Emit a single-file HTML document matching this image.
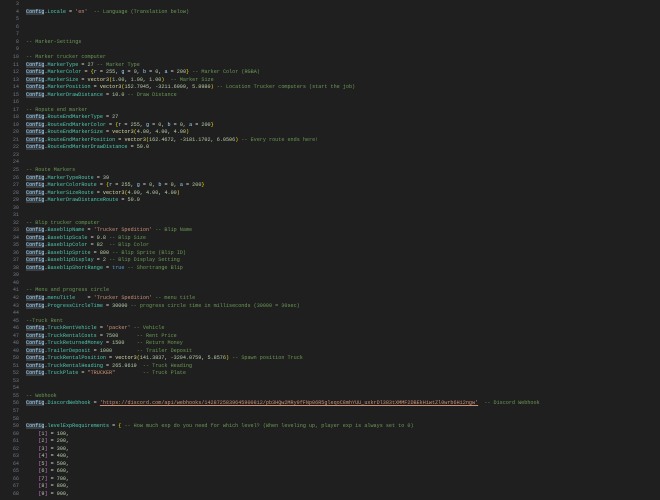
<!DOCTYPE html>
<html><head><meta charset="utf-8"><style>
html,body{margin:0;padding:0;background:#1f1f1f;width:660px;height:500px;overflow:hidden}
#c{position:absolute;top:1.3px;left:0;font-family:"Liberation Mono",monospace;font-size:5.13px;line-height:7.54px;color:#d4d4d4}
.l{height:7.54px;white-space:pre;overflow:visible}
.n{display:inline-block;width:19px;text-align:right;color:#6e7681;margin-right:7px}
.k{color:#9cdcfe;background:#3a3d41}
.p{color:#4ec9b0}
.c{color:#6a9955}
.s{color:#ce9178}
.u{color:#ce9178;text-decoration:underline}
.d{color:#b5cea8}
.f{color:#dcdcaa}
.b{color:#ffd700}
.v{color:#9cdcfe}
.t{color:#569cd6}
.m{color:#da70d6}
</style></head><body><div id="c"><div class="l"><span class="n">3</span></div><div class="l"><span class="n">4</span><span class="k">Config</span>.<span class="p">Locale</span> = <span class="s">'en'</span>  <span class="c">-- Language (Translation below)</span></div><div class="l"><span class="n">5</span></div><div class="l"><span class="n">6</span></div><div class="l"><span class="n">7</span></div><div class="l"><span class="n">8</span><span class="c">-- Marker-Settings</span></div><div class="l"><span class="n">9</span></div><div class="l"><span class="n">10</span><span class="c">-- Marker trucker computer</span></div><div class="l"><span class="n">11</span><span class="k">Config</span>.<span class="p">MarkerType</span> = <span class="d">27</span> <span class="c">-- Marker Type</span></div><div class="l"><span class="n">12</span><span class="k">Config</span>.<span class="p">MarkerColor</span> = <span class="b">{</span><span class="v">r</span> = <span class="d">255</span>, <span class="v">g</span> = <span class="d">0</span>, <span class="v">b</span> = <span class="d">0</span>, <span class="v">a</span> = <span class="d">200</span><span class="b">}</span> <span class="c">-- Marker Color (RGBA)</span></div><div class="l"><span class="n">13</span><span class="k">Config</span>.<span class="p">MarkerSize</span> = <span class="f">vector3</span><span class="b">(</span><span class="d">1.00</span>, <span class="d">1.00</span>, <span class="d">1.00</span><span class="b">)</span>  <span class="c">-- Marker Size</span></div><div class="l"><span class="n">14</span><span class="k">Config</span>.<span class="p">MarkerPosition</span> = <span class="f">vector3</span><span class="b">(</span><span class="d">152.7945</span>, <span class="d">-3211.6909</span>, <span class="d">5.8980</span><span class="b">)</span> <span class="c">-- Location Trucker computers (start the job)</span></div><div class="l"><span class="n">15</span><span class="k">Config</span>.<span class="p">MarkerDrawDistance</span> = <span class="d">10.0</span> <span class="c">-- Draw Distance</span></div><div class="l"><span class="n">16</span></div><div class="l"><span class="n">17</span><span class="c">-- Ropute end marker</span></div><div class="l"><span class="n">18</span><span class="k">Config</span>.<span class="p">RouteEndMarkerType</span> = <span class="d">27</span></div><div class="l"><span class="n">19</span><span class="k">Config</span>.<span class="p">RouteEndMarkerColor</span> = <span class="b">{</span><span class="v">r</span> = <span class="d">255</span>, <span class="v">g</span> = <span class="d">0</span>, <span class="v">b</span> = <span class="d">0</span>, <span class="v">a</span> = <span class="d">200</span><span class="b">}</span></div><div class="l"><span class="n">20</span><span class="k">Config</span>.<span class="p">RouteEndMarkerSize</span> = <span class="f">vector3</span><span class="b">(</span><span class="d">4.00</span>, <span class="d">4.00</span>, <span class="d">4.00</span><span class="b">)</span></div><div class="l"><span class="n">21</span><span class="k">Config</span>.<span class="p">RouteEndMarkerPosition</span> = <span class="f">vector3</span><span class="b">(</span><span class="d">162.4672</span>, <span class="d">-3181.1702</span>, <span class="d">6.0506</span><span class="b">)</span> <span class="c">-- Every route ends here!</span></div><div class="l"><span class="n">22</span><span class="k">Config</span>.<span class="p">RouteEndMarkerDrawDistance</span> = <span class="d">50.0</span></div><div class="l"><span class="n">23</span></div><div class="l"><span class="n">24</span></div><div class="l"><span class="n">25</span><span class="c">-- Route Markers</span></div><div class="l"><span class="n">26</span><span class="k">Config</span>.<span class="p">MarkerTypeRoute</span> = <span class="d">39</span></div><div class="l"><span class="n">27</span><span class="k">Config</span>.<span class="p">MarkerColorRoute</span> = <span class="b">{</span><span class="v">r</span> = <span class="d">255</span>, <span class="v">g</span> = <span class="d">0</span>, <span class="v">b</span> = <span class="d">0</span>, <span class="v">a</span> = <span class="d">200</span><span class="b">}</span></div><div class="l"><span class="n">28</span><span class="k">Config</span>.<span class="p">MarkerSizeRoute</span> = <span class="f">vector3</span><span class="b">(</span><span class="d">4.00</span>, <span class="d">4.00</span>, <span class="d">4.00</span><span class="b">)</span></div><div class="l"><span class="n">29</span><span class="k">Config</span>.<span class="p">MarkerDrawDistanceRoute</span> = <span class="d">50.0</span></div><div class="l"><span class="n">30</span></div><div class="l"><span class="n">31</span></div><div class="l"><span class="n">32</span><span class="c">-- Blip trucker computer</span></div><div class="l"><span class="n">33</span><span class="k">Config</span>.<span class="p">BaseblipName</span> = <span class="s">'Trucker Spedition'</span> <span class="c">-- Blip Name</span></div><div class="l"><span class="n">34</span><span class="k">Config</span>.<span class="p">BaseblipScale</span> = <span class="d">0.8</span> <span class="c">-- Blip Size</span></div><div class="l"><span class="n">35</span><span class="k">Config</span>.<span class="p">BaseblipColor</span> = <span class="d">82</span>  <span class="c">-- Blip Color</span></div><div class="l"><span class="n">36</span><span class="k">Config</span>.<span class="p">BaseblipSprite</span> = <span class="d">800</span> <span class="c">-- Blip Sprite (Blip ID)</span></div><div class="l"><span class="n">37</span><span class="k">Config</span>.<span class="p">BaseblipDisplay</span> = <span class="d">2</span> <span class="c">-- Blip Display Setting</span></div><div class="l"><span class="n">38</span><span class="k">Config</span>.<span class="p">BaseblipShortRange</span> = <span class="t">true</span> <span class="c">-- Shortrange Blip</span></div><div class="l"><span class="n">39</span></div><div class="l"><span class="n">40</span></div><div class="l"><span class="n">41</span><span class="c">-- Menu and progress circle</span></div><div class="l"><span class="n">42</span><span class="k">Config</span>.<span class="p">menuTitle</span>    = <span class="s">'Trucker Spedition'</span> <span class="c">-- menu title</span></div><div class="l"><span class="n">43</span><span class="k">Config</span>.<span class="p">ProgressCircleTime</span> = <span class="d">30000</span> <span class="c">-- progress circle time in milliseconds (30000 = 30sec)</span></div><div class="l"><span class="n">44</span></div><div class="l"><span class="n">45</span><span class="c">--Truck Rent</span></div><div class="l"><span class="n">46</span><span class="k">Config</span>.<span class="p">TruckRentVehicle</span> = <span class="s">'packer'</span> <span class="c">-- Vehicle</span></div><div class="l"><span class="n">47</span><span class="k">Config</span>.<span class="p">TruckRentalCosts</span> = <span class="d">7500</span>      <span class="c">-- Rent Price</span></div><div class="l"><span class="n">48</span><span class="k">Config</span>.<span class="p">TruckReturnedMoney</span> = <span class="d">1500</span>    <span class="c">-- Return Money</span></div><div class="l"><span class="n">49</span><span class="k">Config</span>.<span class="p">TrailerDeposit</span> = <span class="d">1000</span>        <span class="c">-- Trailer Deposit</span></div><div class="l"><span class="n">50</span><span class="k">Config</span>.<span class="p">TruckRentalPosition</span> = <span class="f">vector3</span><span class="b">(</span><span class="d">141.3837</span>, <span class="d">-3204.0759</span>, <span class="d">5.8576</span><span class="b">)</span> <span class="c">-- Spawn position Truck</span></div><div class="l"><span class="n">51</span><span class="k">Config</span>.<span class="p">TruckRentalHeading</span> = <span class="d">265.9619</span>  <span class="c">-- Truck Heading</span></div><div class="l"><span class="n">52</span><span class="k">Config</span>.<span class="p">TruckPlate</span> = <span class="s">"TRUCKER"</span>         <span class="c">-- Truck Plate</span></div><div class="l"><span class="n">53</span></div><div class="l"><span class="n">54</span></div><div class="l"><span class="n">55</span><span class="c">-- Webhook</span></div><div class="l"><span class="n">56</span><span class="k">Config</span>.<span class="p">DiscordWebhook</span> = <span class="u">'https://discord.com/api/webhooks/1428725839645900812/pb3HQw2MRy9fFNp06R5gleqoC8mhYUU_uxkrDl383tXMMF2DBEkHiwtZl0wrb6Hi2ngw'</span>  <span class="c">-- Discord Webhook</span></div><div class="l"><span class="n">57</span></div><div class="l"><span class="n">58</span></div><div class="l"><span class="n">59</span><span class="k">Config</span>.<span class="p">levelExpRequirements</span> = <span class="b">{</span> <span class="c">-- How much exp do you need for which level? (When leveling up, player exp is always set to 0)</span></div><div class="l"><span class="n">60</span>    <span class="m">[</span><span class="d">1</span><span class="m">]</span> = <span class="d">100</span>,</div><div class="l"><span class="n">61</span>    <span class="m">[</span><span class="d">2</span><span class="m">]</span> = <span class="d">200</span>,</div><div class="l"><span class="n">62</span>    <span class="m">[</span><span class="d">3</span><span class="m">]</span> = <span class="d">300</span>,</div><div class="l"><span class="n">63</span>    <span class="m">[</span><span class="d">4</span><span class="m">]</span> = <span class="d">400</span>,</div><div class="l"><span class="n">64</span>    <span class="m">[</span><span class="d">5</span><span class="m">]</span> = <span class="d">500</span>,</div><div class="l"><span class="n">65</span>    <span class="m">[</span><span class="d">6</span><span class="m">]</span> = <span class="d">600</span>,</div><div class="l"><span class="n">66</span>    <span class="m">[</span><span class="d">7</span><span class="m">]</span> = <span class="d">700</span>,</div><div class="l"><span class="n">67</span>    <span class="m">[</span><span class="d">8</span><span class="m">]</span> = <span class="d">800</span>,</div><div class="l"><span class="n">68</span>    <span class="m">[</span><span class="d">9</span><span class="m">]</span> = <span class="d">900</span>,</div></div></body></html>
